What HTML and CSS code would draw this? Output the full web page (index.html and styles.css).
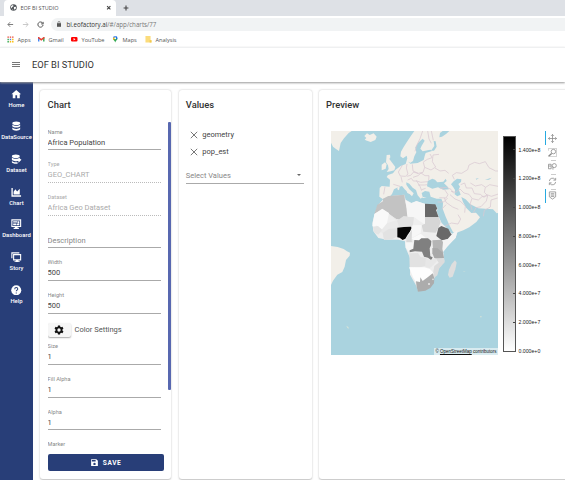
FILE: index.html
```
<!DOCTYPE html>
<html lang="en">
<head>
<meta charset="utf-8">
<title>EOF BI STUDIO</title>
<link rel="stylesheet" href="styles.css">
</head>
<body>
<div class="tabs">
  <div class="tab">
    <svg class="globe" viewBox="0 0 16 16"><circle cx="8" cy="8" r="7.5" fill="#50555a"/><path d="M3 4l4-2 1 3-3 2-1 3-2-3zM9 7l4-1 1 3-3 4-2-2zM5 11l2 1v2z" fill="#fff"/></svg>
    <span>EOF BI STUDIO</span>
    <svg class="close" viewBox="0 0 10 10"><path d="M2 2l6 6M8 2l-6 6" stroke="#444" stroke-width="2"/></svg>
  </div>
  <svg class="plus" viewBox="0 0 10 10"><path d="M5 1v8M1 5h8" stroke="#444" stroke-width="1.8"/></svg>
</div>
<div class="toolbar">
  <svg viewBox="0 0 24 24"><path d="M21 12H4M11 4l-8 8 8 8" fill="none" stroke="#555" stroke-width="2.6"/></svg>
  <svg viewBox="0 0 24 24"><path d="M3 12h17M13 4l8 8-8 8" fill="none" stroke="#aaa" stroke-width="2.2"/></svg>
  <svg viewBox="0 0 24 24"><path d="M20 8A9 9 0 1 0 21 13M21 3v7h-7" fill="none" stroke="#444" stroke-width="3"/></svg>
  <div class="url"><svg viewBox="0 0 10 14"><path d="M0 5h10v9H0z" fill="#555"/><path d="M2.5 6V3a2.5 2.5 0 0 1 5 0v3" fill="none" stroke="#555" stroke-width="1.5"/></svg><span><b>bi.eofactory.ai</b>/#/app/charts/77</span></div>
</div>
<div class="bookmarks">
  <span class="bm apps"><svg viewBox="0 0 14 14"><g fill="#e94335"><path d="M1 1h3v3H1zM6 1h3v3H6zM11 1h3v3h-3z"/></g><path d="M1 6h3v3H1z" fill="#34a853"/><path d="M6 6h3v3H6z" fill="#4285f4"/><path d="M11 6h3v3h-3zM6 11h3v3H6zM11 11h3v3h-3z" fill="#fbbc05"/><path d="M1 11h3v3H1z" fill="#34a853"/></svg>Apps</span>
  <span class="bm gmail"><svg viewBox="0 0 14 14"><path d="M0 3h3v9H0z" fill="#4285f4"/><path d="M11 3h3v9h-3z" fill="#34a853"/><path d="M0 2h2l5 4 5-4h2v3L7 10 0 5z" fill="#ea4335"/></svg>Gmail</span>
  <span class="bm yt"><svg viewBox="0 0 14 14"><rect y="2" width="14" height="10" rx="2.5" fill="#f00"/><path d="M5.5 4.5l4 2.5-4 2.500z" fill="#fff"/></svg>YouTube</span>
  <span class="bm maps"><svg viewBox="0 0 14 14"><path d="M7 14C6 10 2 9 2 5h10c0 4-4 5-5 9z" fill="#34a853"/><path d="M2 5a5 5 0 0 1 5-5v5L3 8z" fill="#4285f4"/><path d="M7 0a5 5 0 0 1 5 5L8 8z" fill="#1a73e8"/><path d="M2 5l3-3 2 3-4 4z" fill="#fbbc05"/><circle cx="7" cy="5" r="1.8" fill="#fff"/></svg>Maps</span>
  <span class="bm"><svg viewBox="0 0 14 14"><path d="M1 0h11v9h2v5H1z" fill="#fbdc7c"/><path d="M10 9h4v5h-4z" fill="#f2c94f"/></svg>Analysis</span>
</div>
<header class="head"><i class="burger"></i><span>EOF BI STUDIO</span></header>
<div class="main">
  <nav class="side">
    <a><svg viewBox="0 0 24 24"><path d="M10 21v-7h4v7h6v-9h3L12 2 1 12h3v9z"/></svg>Home</a>
    <a><svg viewBox="0 0 24 24"><ellipse cx="12" cy="5" rx="9" ry="4"/><path d="M3 8c3 4 15 4 18 0v4c-2 4-16 4-18 0zM3 15c3 4 15 4 18 0v4c-2 4-16 4-18 0z"/></svg>DataSource</a>
    <a><svg viewBox="0 0 24 24"><ellipse cx="11" cy="5" rx="9" ry="4"/><path d="M2 8c3 4 15 4 18 0v2l4 3-7 7v-4c-5 1-13 0-15-3zM2 16c3 3 9 3 13 3v3c-5 1-12 0-13-3z"/></svg>Dataset</a>
    <a><svg viewBox="0 0 24 24"><path d="M1 2h3v17h19v3H1zM6 17v-6l4-6 4 5 6-6v13z"/></svg>Chart</a>
    <a><svg viewBox="0 0 24 24"><path d="M2 2h20v15H2z" fill="none" stroke="#fff" stroke-width="2.5"/><path d="M5 5h9v3H5zM5 10h7v4H5zM15 5h4v5h-4zM13 11h6v3h-6zM9 18h6v3H9zM6 20h12v3H6z"/></svg>Dashboard</a>
    <a><svg viewBox="0 0 24 24"><path d="M6 6h16v12H6zM2 14V2h17" fill="none" stroke="#fff" stroke-width="2.5"/><path d="M11 18h6v3h3v3H8v-3h3z"/></svg>Story</a>
    <a><svg viewBox="0 0 24 24"><circle cx="12" cy="12" r="11.500"/><path d="M8.500 9.500c0-5 7-4.500 7-.5 0 3-3.500 2.500-3.500 5.500M12 17v2.500" fill="none" stroke="#283e78" stroke-width="2.3"/></svg>Help</a>
  </nav>
  <section class="card chart">
    <h2>Chart</h2>
    <div class="form">
      <div class="field"><label>Name</label><p>Africa Population</p></div>
      <div class="field off"><label>Type</label><p>GEO_CHART</p></div>
      <div class="field off"><label>Dataset</label><p>Africa Geo Dataset</p></div>
      <div class="field empty"><label></label><p>Description</p></div>
      <div class="field"><label>Width</label><p>500</p></div>
      <div class="field"><label>Height</label><p>500</p></div>
      <div class="color"><button><svg viewBox="0 0 24 24"><path fill-rule="evenodd" d="M9.500 1h5l.6 3.200 2 1.100L20.200 4.200l2.500 4.300-2.500 2.200v2.600l2.500 2.200-2.500 4.300-3.100-1.100-2 1.100-.6 3.200h-5l-.6-3.200-2-1.100-3.100 1.100-2.500-4.300 2.500-2.200v-2.600L1.300 8.500l2.500-4.300 3.100 1.100 2-1.100zM12 8a4 4 0 1 0 0 8 4 4 0 0 0 0-8z"/></svg></button><span>Color Settings</span></div>
      <div class="field"><label>Size</label><p>1</p></div>
      <div class="field"><label>Fill Alpha</label><p>1</p></div>
      <div class="field"><label>Alpha</label><p>1</p></div>
      <div class="field"><label>Marker</label></div>
    </div>
    <button class="save"><svg viewBox="0 0 24 24"><path fill-rule="evenodd" d="M3 3h14l4 4v14H3zM5 5v4h10V5zM12 12.500a3.200 3.200 0 1 0 0 6.400 3.200 3.200 0 0 0 0-6.400z"/></svg>SAVE</button>
    <i class="thumb"></i>
  </section>
  <section class="card values">
    <h2>Values</h2>
    <ul>
      <li><svg viewBox="0 0 10 10"><path d="M1 1l8 8M9 1l-8 8"/></svg>geometry</li>
      <li><svg viewBox="0 0 10 10"><path d="M1 1l8 8M9 1l-8 8"/></svg>pop_est</li>
    </ul>
    <div class="select"><span>Select Values</span><i></i></div>
  </section>
  <section class="card preview">
    <h2>Preview</h2>
    <div class="plot">
      <div class="map">
        <svg viewBox="18 19 501 672" preserveAspectRatio="none">
          <rect x="18" y="19" width="502" height="673" fill="#aad3df"/>
          <g fill="#f2efe9">
            <path d="M18 19h62l-9 6-14 16-10 14-5 24-8-5-10-8-6-12z"/>
            <path d="M118 34l8-8 8 5 12-5 9 10-4 10-14 6-11-4-7-3 5-5z"/>
            <path d="M185 91l10-1 1 8-3 5 9 12 9 12-3 10-11 3-12 2 6-9-2-11-6-9zM170 120l10-7 5 6-3 13-12 5z"/>
            <path d="M268 19l-10 14-12 18-10 16-8 14-2 14 8 6 11-8 3 14 7 8 9-6 4-14 6-12-3-15 10-15 12-11 6 6-9 15-4 9 7 8 23-5 5 4-19 6-3 9-3 12-18 9-22 2-5-4 3-17-7 5-5 17-15 6-15 11-8 11-15 5-4 6 10 8-1 21-24-2-6 6-1 26 10 7 17-2 11-13 6-14 12-6 12-4 8 10 14 13 8 8 5-9-13-12-9-14 0-7 9 4 10 12 10 7 5 16 9 10 6-5-3-12 10-6 13 2 4 15 18 6 14 0 5 12-1 18 9 24 12 27 10 19 7 4 24-9 18-9 21-16 11-14-12-14-14 1-15-15-10-18-5-15 13 7 14 15 24 12 21 1 23 2 11 12 7-2 3 23 7 25 8 11 8-11 0-24 8-22 9-6V19z"/>
            <path d="M18 364l20 3 18 6 10 7 9 4-1 9-11 13-4 20-7 16-15 8-13 18-6 13zM245 199l15 3-4 7-9-4zM218 184l6 3-2 10-5-3zM291 216l14 3-12 1z"/>
          </g>
          <g fill="#aad3df">
            <path d="M306 185l2-16 14-7 8 3 7 8 18-2 7-9 3 7-8 7 11 10 4 8-17 1-16-7-17 4z"/>
            <path d="M386 170l10-8 13 2-1 8-8 6 5 8-4 8 6 16-10 5-8-6 1-13-6-10-6-7zM318 78l10-14-2-15 6 1 3 16-8 12zM345 25l8-6h20l-9 8-13 9-8 2zM452 162l10-2-8 5zM480 165l20-6-8 6z"/>
          </g>
          <g class="borders">
            <path d="M270 80l6-20 9-18 8-23M308 19l4 24 7 13M319 19l6 28M232 122l-12 20 6 12 15 1 8-7-5-18 2-12M262 119l2 20 16 7 14-3 5-15-4-15M295 112l12-8 14-5-6-11M299 128l19 8 14-9-10-16 2-20 18-2M228 156l4 17M205 179l20 6M180 186l-4 23M245 155l12-3 9-10 14 5M248 166l11-5 6 8 10 0 10 16 5 13M264 158l15-5 9-8 12 8 12 0-1 14M273 168l14 5 21-2M279 181l20 0 8-1M290 195l12-4M345 190l14 5 10 15-6 10-20-1M358 219l5 14 20 14 17 7M338 232l18 0 12-12M350 254l13-14M375 210l15 13 15 6 16 15-2 20M378 200l14 3 13-10 12 12 15 4 9 12-5 15 5 20M388 164l-6-12 12-8 16 2 18-11 4-14 17-8 14 4 18-6 11 18 20 10 15 0M407 180l12-5 5 15 17 0 7 17 18 2 11 9 9-8 13 5 21-7M436 175l15 9 19-4 12 8 12-8 25 5M442 222l18 4 11-10 17-3-4 16-16 17-15 3-8 15M475 275l3-18 18-10 2-21 20-6M481 188l-3 15 10 10M330 130l15 9 15-2 11 9"/>
            <path d="M360 304l19-9 20 3 8-15-8-13M344 190l21-2 13 6 8 12"/>
          </g>
          <g transform="translate(120 180)">
            <path d="M40 60l16-18 14-7 48-5 4 15 18 10 15-5 25 7 32 3 6 12-3 8 7 18 8 17 10 10 22 23 16-8-6 20-27 25-10 15 3 30-23 30-10 30-20 25-25 5-8-20-17-30V220l-13-30-2-20-20-5H65l-25-5-15-20-3-25 8-30z" fill="#eee"/>
            <path d="M54 42l16-8 48-4 3 24 8 28v14l-19 11-17-4-41-31-24 16 9-28 17-10z" fill="#c3c3c3"/>
            <path d="M28 88l24-15 20 12-6 30 7 17-23 2-14-11-14 2z" fill="#f9f9f9"/>
            <path d="M66 116l28-9-25-20 25 16 19 4-9 22-30 8-19 9-29-9 9-14 16 11z" fill="#e9e9e9"/>
            <path d="M24 128l15-4 12 12-11 14-12-6z" fill="#e4e4e4"/>
            <path d="M53 145l18-12 25-2 2 24-17 9-24 2zM96 108l20-14 31 4-3 23-8 9-33 0z" fill="#e2e2e2"/>
            <path d="M122 47l16 9 16-7 26 9v62l-33-23-20-1z" fill="#f6f6f6"/>
            <path d="M180 57l14 1 17 1 6 13-4 4 8 22h-41z" fill="#686868"/>
            <path d="M180 98h41l6 14-7 19-8 13-37-3-5-19 10-5z" fill="#d6d6d6"/>
            <path d="M97 129l20-2 21-1 3 7-12 16-8 13-8 4-9-7-7-1z" fill="#050505"/>
            <path d="M143 122l27-1-3 24-27 15-9-9z" fill="#f7f7f7"/>
            <path d="M124 161l17-26-1 35 7 6-8 3-15-3z" fill="#d9d9d9"/>
            <path d="M140 161l27-14 20 17-17 1-20 5z" fill="#fafafa"/>
            <path d="M121 173h25l-3 24-10 6-11-15z" fill="#f7f7f7"/>
            <path d="M220 130l9-6 21 8 8 15 6 5-14 11-20 4-16-13z" fill="#696969"/>
            <path d="M263 146l15-9-6 22-25 27-12 15-4-13 1-20 16-5z" fill="#f4f4f4"/>
            <path d="M148 166l14 1 7-6 20 0 10 8-1 13-4 9 2 24 7 3-4 9-10-8-12-3-6-15-21-1-16 3 0-6 11-5z" fill="#808080"/>
            <path d="M202 167l28-2 4 8-2 20 3 12-17 3-14-17z" fill="#b5b5b5"/>
            <path d="M202 190l16 1 16 14 3 15-14 5-15-5-6-14z" fill="#a9a9a9"/>
            <path d="M133 206l26-1 8 12 17 2-2 25-18 4-30-1z" fill="#e2e2e2"/>
            <path d="M182 221l14 5 14-6 6 9-11 12-11 10-13-4z" fill="#e7e7e7"/>
            <path d="M212 221l25-1 2 13-16 18-6 21-10 8-3-14 4-22 13-10z" fill="#dcdcdc"/>
            <path d="M132 248h46l17 5 11 13-16 13-17 10-7 4-13 0-9-15z" fill="#fdfdfd"/>
            <path d="M153 290l12 2 1-14 7 11 16-12 14-11 5 15-1 15-11 14-15 8-22 3-4-14z" fill="#acacac"/>
            <circle cx="192" cy="298" r="3" fill="#e8e8e8"/><circle cx="204" cy="284" r="2.500" fill="#e8e8e8"/>
            <path d="M270 227l5 7-4 20-8 22-9 3-5-8 3-16 8-17z" fill="#dedede"/>
          </g>
          <path d="M64 603l6 4 2 5-5-2zM465 575h5v3h-5zM414 441l8-2-5 3z" fill="#d5e2d8"/>
        </svg>
        <span class="credit">© <u>OpenStreetMap</u> contributors</span>
      </div>
      <div class="bar"></div>
      <div class="ticks"><span>1.400e+8</span><span>1.200e+8</span><span>1.000e+8</span><span>8.000e+7</span><span>6.000e+7</span><span>4.000e+7</span><span>2.000e+7</span><span>0.000e+0</span></div>
      <div class="tools">
        <span class="on"><svg viewBox="0 0 20 20"><path d="M10 1v18M1 10h18M7 4l3-3 3 3M7 16l3 3 3-3M4 7l-3 3 3 3M16 7l3 3-3 3"/></svg></span>
        <span><svg viewBox="0 0 20 20"><path d="M1 6V1h18v18H1v-3" opacity=".5"/><circle cx="12" cy="8" r="5"/><path d="M8 12l-6 6" stroke-width="3"/></svg></span>
        <span class="line"><svg viewBox="0 0 20 20"><path d="M1 5h6v10H1zM1 9h6" /><circle cx="14" cy="8" r="4.500"/><path d="M11 11v6"/></svg></span>
        <span class="line"><svg viewBox="0 0 20 20"><path d="M3 9a7 7 0 0 1 13-3M17 11a7 7 0 0 1-13 3M17 2v5h-5M3 18v-5h5"/></svg></span>
        <span class="on line"><svg viewBox="0 0 20 20"><path d="M3 2h14v11l-7 5-7-5zM6 6h8M6 9h8M6 12h8"/></svg></span>
      </div>
    </div>
  </section>
</div>
</body>
</html>
```
FILE: styles.css
```
* { box-sizing: border-box; }
body { margin: 0; width: 565px; height: 480px; overflow: hidden; background: #fff; font-family: Roboto, sans-serif; font-size: 7.5px; color: #555; display: flex; flex-direction: column; }
svg { display: block; flex: none; }
h2, p, ul { margin: 0; padding: 0; font-weight: 400; }

.tabs { height: 15.5px; background: #dee1e6; display: flex; align-items: center; padding-left: 4px; flex: none; }
.tab { width: 112px; height: 15.5px; background: #fff; border-radius: 4px 4px 0 0; display: flex; align-items: center; padding: 0 5px 0 5.500px; font: 5.5px "Open Sans", sans-serif; color: #555; }
.globe { width: 7px; height: 7px; margin-right: 4px; }
.close { width: 5.5px; height: 5.5px; margin-left: auto; }
.plus { width: 6px; height: 6px; margin-left: 7px; }
.toolbar { height: 17px; flex: none; display: flex; align-items: center; padding-left: 7px; gap: 8px; }
.toolbar > svg { width: 7px; height: 7px; }
.url { flex: 1; height: 13px; margin-left: -1px; background: #f1f3f4; border-radius: 7px 0 0 7px; display: flex; align-items: center; padding-left: 6px; font: 6.2px "Open Sans", sans-serif; color: #777; }
.url svg { width: 4px; height: 6px; margin-right: 5.5px; }
.url b { font-weight: 400; color: #333; }
.bookmarks { height: 14px; flex: none; display: flex; align-items: center; padding-left: 7px; font: 5.6px "Open Sans", sans-serif; color: #555; }
.bm { display: flex; align-items: center; gap: 4px; width: 33px; white-space: nowrap; }
.bm svg { width: 6.500px; height: 6.500px; }
.apps { width: 31px; }
.gmail { width: 33px; }
.yt { width: 41px; }

.head { height: 35px; flex: none; border-top: 1.5px solid #eff0f1; display: flex; align-items: center; padding-left: 12px; gap: 12px; font-size: 9.3px; color: #333; box-shadow: 0 1px 2px #999; position: relative; background: #fff; }
.burger { width: 8px; height: 5px; border-top: 1px solid #777; border-bottom: 1px solid #777; background: linear-gradient(transparent 33%, #777 33%, #777 67%, transparent 67%); }

.main { flex: 1; display: flex; min-height: 0; }
.side { width: 33px; background: #283e78; color: #fff; font-size: 5.9px; font-weight: 500; display: flex; flex-direction: column; padding-top: 7px; }
.side a { height: 32.7px; display: flex; flex-direction: column; align-items: center; gap: 1.500px; line-height: 8px; }
.side svg { width: 10.500px; height: 10.500px; fill: #fff; }
.card { margin-top: 8px; height: 389px; background: #fff; border-radius: 3px; box-shadow: 0 0.5px 2px #bbb; padding: 9px 8px 0; }
h2 { font-size: 9.4px; line-height: 12px; font-weight: 500; color: #333; }
.chart { width: 131px; margin-left: 7px; padding-left: 7.600px; position: relative; }
.form { height: 343.500px; padding-top: 7px; overflow: hidden; }
.field { width: 113px; height: 32.700px; padding-top: 10px; border-bottom: 1px solid #aaa; }
.field label { display: block; height: 9px; line-height: 9px; font-size: 5.6px; color: #888; }
.field p { line-height: 11px; color: #444; }
.field.off { border-bottom: 1px dotted #bbb; }
.field.off label, .field.off p { color: #aaa; }
.field.empty p { color: #888; }
.color { height: 14px; margin: 9px 0 -4.500px; display: flex; align-items: center; gap: 4px; }
.color button { width: 23px; height: 14px; padding: 0; border: 0; border-radius: 2px; background: #f6f6f6; box-shadow: 0 1px 1.500px #aaa; display: grid; place-items: center; }
.color svg { width: 10px; height: 10px; fill: #111; }
.save { width: 116px; height: 17px; border: 0; border-radius: 2px; background: #283e78; color: #fff; font: 700 6.6px Roboto, sans-serif; letter-spacing: .6px; display: flex; align-items: center; justify-content: center; gap: 4px; }
.save svg { width: 9px; height: 9px; fill: #fff; }
.thumb { position: absolute; right: 0; top: 32px; width: 3px; height: 268px; background: #5868b0; border-radius: 1px; }
.values { width: 133px; margin-left: 7.500px; padding-left: 7.300px; }
ul { list-style: none; padding: 15.500px 0 0 4px; }
li { height: 17px; display: flex; align-items: center; gap: 4.500px; color: #444; }
li svg { width: 8px; height: 8px; fill: none; stroke: #555; }
.select { width: 118px; margin-top: 7px; height: 17px; border-bottom: 1px solid #aaa; display: flex; justify-content: space-between; align-items: center; padding-right: 3px; color: #888; }
.select i { border: 2.5px solid transparent; border-top-color: #666; border-bottom: 0; }
.preview { flex: 1; margin-left: 7px; margin-right: -10px; padding-left: 7.500px; }
.plot { display: flex; margin: 20.500px 0 0 4.500px; height: 225px; }
.map { width: 167px; height: 224px; position: relative; }
.map svg { width: 167px; height: 224px; }
.borders { fill: none; stroke: #d8c8d2; stroke-width: 2.2; }
.credit { position: absolute; right: 0; bottom: 0; height: 7px; padding: 0 1px; background: #d9ebf0; color: #111; font: 4.500px/7px "Liberation Sans", sans-serif; white-space: nowrap; }
.bar { width: 13px; height: 216px; margin: 4.500px 0 0 5px; border: 1px solid #555; background: repeating-linear-gradient(to top, transparent 0 28px, #444 28px 28.800px) right / 2px 100% no-repeat, linear-gradient(#000, #fff); }
.ticks { margin: 14.500px 0 0 3px; width: 22px; font: 5.2px "Liberation Sans", sans-serif; color: #222; }
.ticks span { display: block; height: 28.800px; line-height: 9px; }
.tools { margin-left: 4.500px; width: 12px; }
.tools span { display: flex; justify-content: flex-end; align-items: center; width: 12px; height: 14.4px; border-left: 1px solid transparent; }
.tools .on { border-left-color: #26aae1; }
.tools svg { width: 9px; height: 9px; fill: none; stroke: #888; stroke-width: 1.700; }
.tools .line { background: linear-gradient(#ccc, #ccc) 5px 0 / 5px 1px no-repeat; }
```
